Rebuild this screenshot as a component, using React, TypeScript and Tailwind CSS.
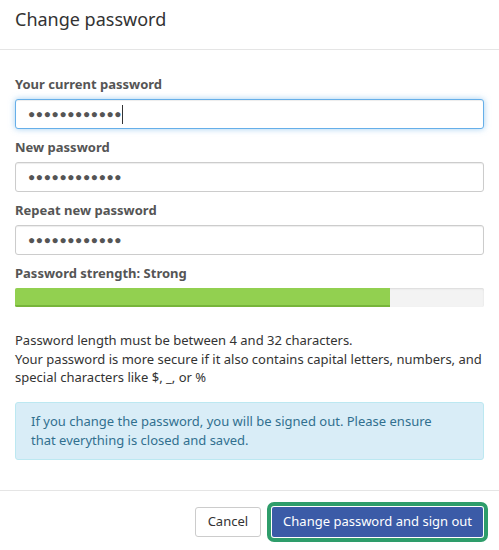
import React from "react";

const font = { fontFamily: '"Noto Sans", "Open Sans", sans-serif' };

const PasswordField: React.FC<{ label: string; focused?: boolean }> = ({
  label,
  focused,
}) => (
  <div className="flex flex-col">
    <label className="text-[13px] leading-[18px] font-bold text-[#555]">
      {label}
    </label>
    <div
      className={`relative mt-[6px] h-[30px] rounded-[3px] border bg-white flex items-center pl-[12px] ${
        focused
          ? "border-[#66afe9] shadow-[inset_0_1px_1px_rgba(0,0,0,0.075),0_0_6px_rgba(102,175,233,0.6)]"
          : "border-[#ccc] shadow-[inset_0_1px_1px_rgba(0,0,0,0.075)]"
      }`}
    >
      <span className="text-[12px] leading-none tracking-[0.6px] text-[#555]">
        ●●●●●●●●●●●●
      </span>
      {focused && <span className="w-px h-[19px] bg-[#333]" />}
    </div>
  </div>
);

export default function App() {
  return (
    <div className="w-[499px] h-[550px] bg-white text-[#333] overflow-hidden" style={font}>
      <div className="h-[50px] border-b border-[#e5e5e5] px-[15px] pt-[7px]">
        <h4 className="text-[18px] leading-[24px] font-normal text-[#333]">
          Change password
        </h4>
      </div>

      <div className="px-[15px] pt-[25px] pb-[30px]">
        <div className="flex flex-col gap-[9px]">
          <PasswordField label="Your current password" focused />
          <PasswordField label="New password" />
          <PasswordField label="Repeat new password" />
          <div className="flex flex-col">
            <span className="text-[13px] leading-[18px] font-bold text-[#555]">
              Password strength: Strong
            </span>
            <div className="mt-[6px] h-[19px] rounded-[2px] bg-[#f3f3f3] shadow-[inset_0_1px_2px_rgba(0,0,0,0.1)] overflow-hidden flex">
              <div className="w-[80%] h-full bg-[#92d050] border-b-2 border-[#77b53a]" />
            </div>
          </div>
        </div>

        <p className="mt-[24px] text-[13px] leading-[18.5px] text-[#333]">
          Password length must be between 4 and 32 characters.
          <br />
          Your password is more secure if it also contains capital letters,
          numbers, and special characters like $, _, or %
        </p>

        <div className="mt-[15px] rounded-[3px] border border-[#bce8f1] bg-[#d9edf7] px-[15px] py-[9px] text-[13px] leading-[19px] text-[#31708f]">
          If you change the password, you will be signed out. Please ensure
          <br />
          that everything is closed and saved.
        </div>
      </div>

      <div className="border-t border-[#e5e5e5] flex justify-end items-center gap-[11px] pt-[16px] pr-[16px]">
        <button className="h-[30px] px-[12px] rounded-[3px] border border-[#ccc] bg-white text-[13px] text-[#333]">
          Cancel
        </button>
        <button className="h-[30px] px-[11px] rounded-[2px] bg-[#3b5ba7] text-[13px] text-white outline-4 outline-offset-1 outline-[#2e9d6b]">
          Change password and sign out
        </button>
      </div>
    </div>
  );
}
